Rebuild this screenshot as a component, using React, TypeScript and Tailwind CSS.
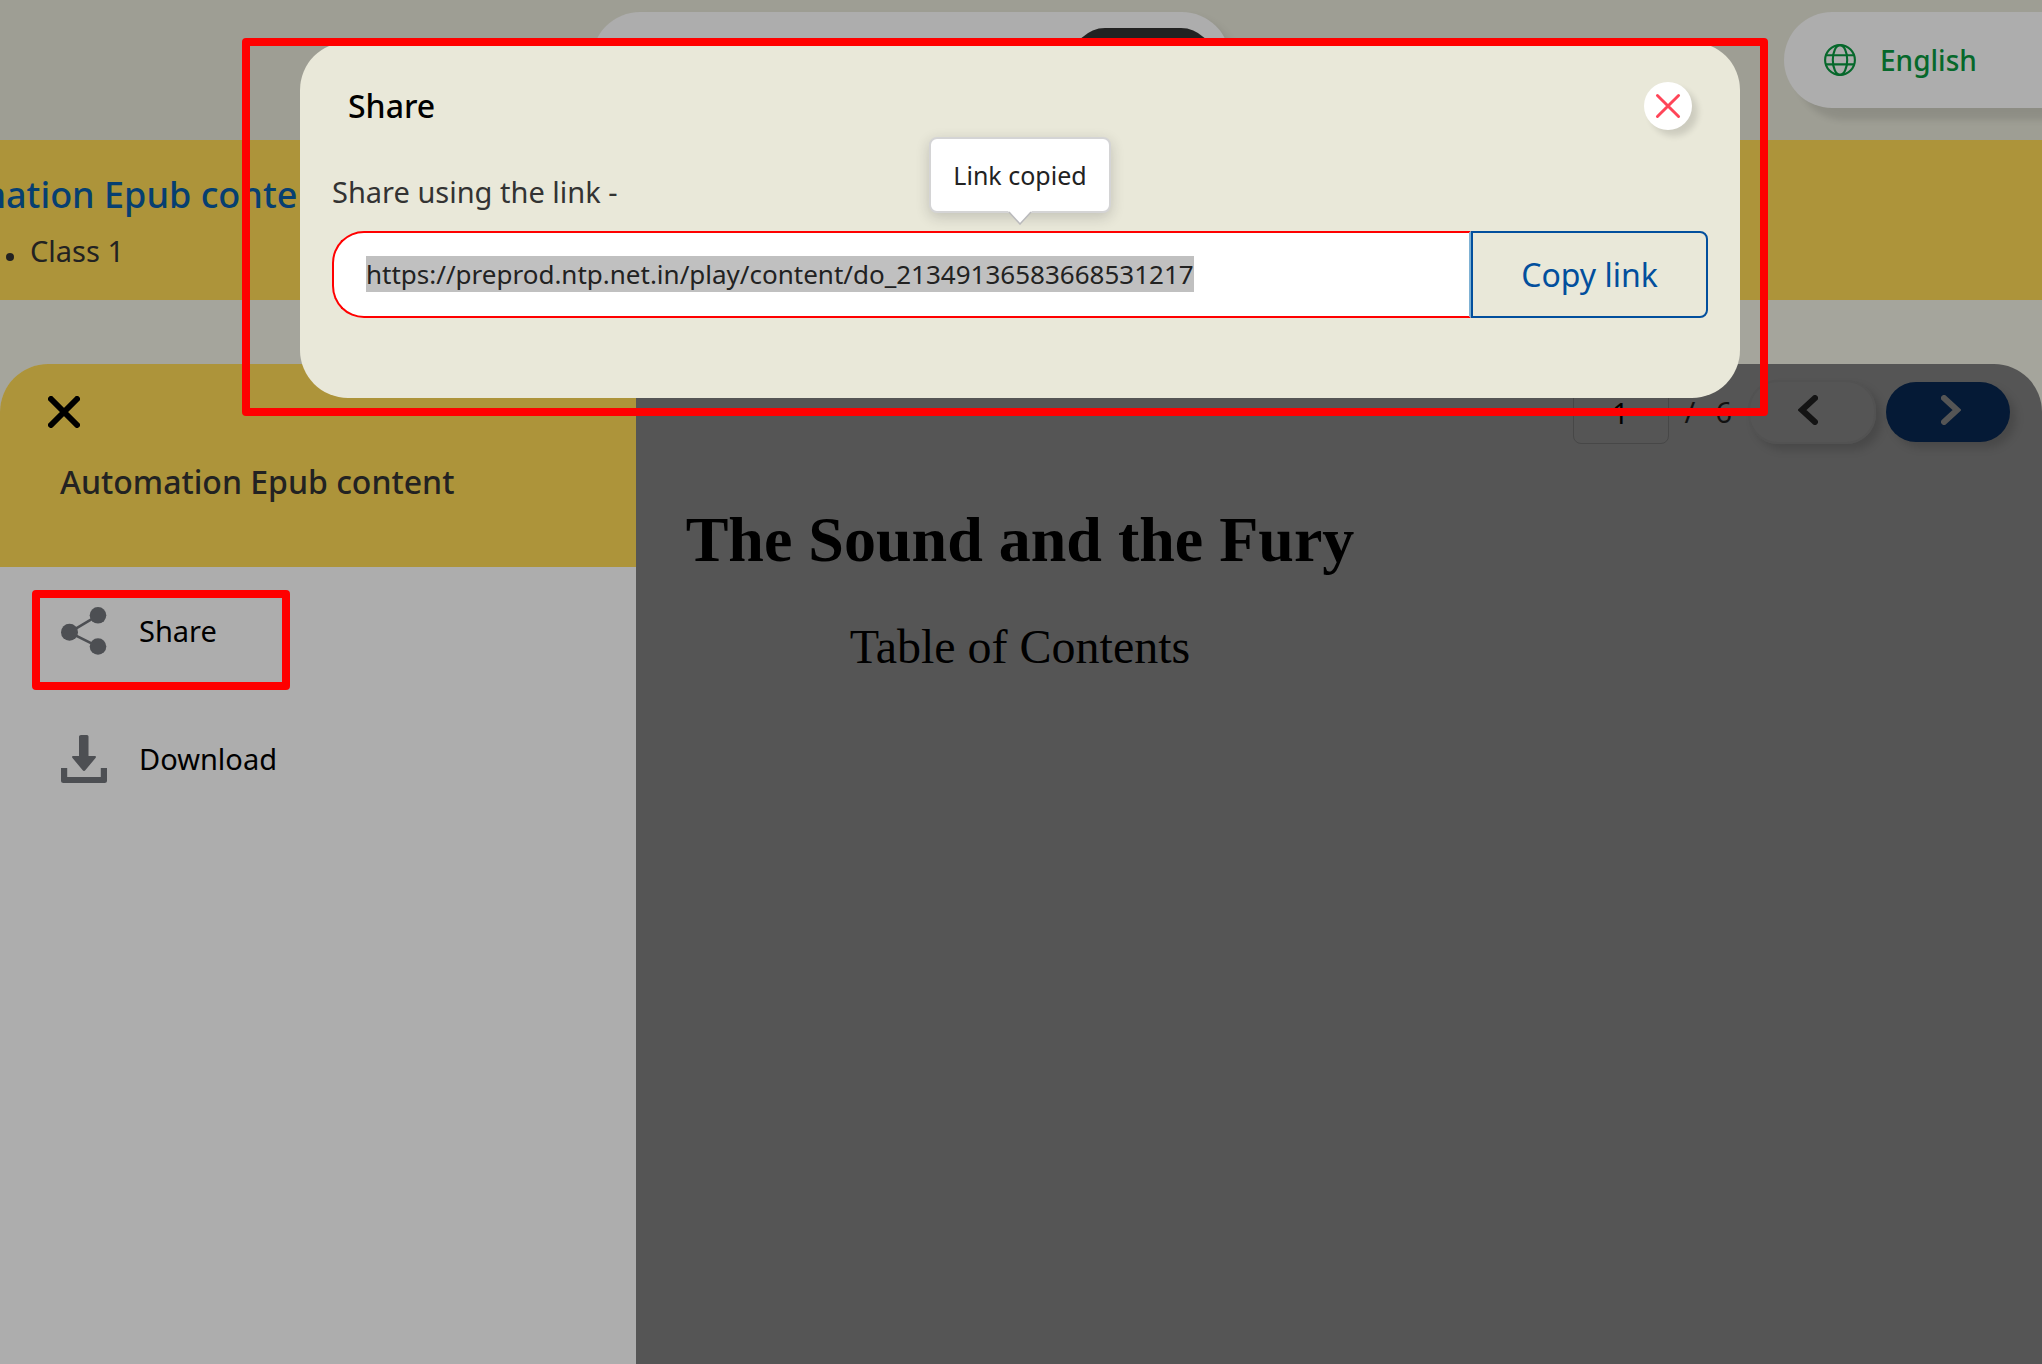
import { useEffect, useRef } from "react";

const LINK = "https://preprod.ntp.net.in/play/content/do_21349136583668531217";

function GlobeIcon() {
  return (
    <svg viewBox="0 0 32 32" className="size-8" fill="none" stroke="currentColor" strokeWidth="2.1" aria-hidden="true">
      <circle cx="16" cy="16" r="14.9" />
      <ellipse cx="16" cy="16" rx="7.2" ry="14.9" />
      <path d="M2 11.200h28M2 20.400h28" />
    </svg>
  );
}

function ShareIcon() {
  return (
    <svg viewBox="0 0 46 48" className="h-12 w-[46px] shrink-0" fill="#4d4f53" aria-hidden="true">
      <path d="M37 8.300 8.500 25.300 37 39.700" fill="none" stroke="#4d4f53" strokeWidth="2.6" />
      <circle cx="37" cy="8.3" r="8.3" />
      <circle cx="8.5" cy="25.3" r="8.5" />
      <circle cx="37" cy="39.5" r="8.3" />
    </svg>
  );
}

function DownloadIcon() {
  return (
    <svg viewBox="0 0 46 48" className="h-12 w-[46px] shrink-0" fill="#4d4f53" aria-hidden="true">
      <path d="M20 0h6q1.500 0 1.500 1.500V21h6q2.500 0 1 2L24.500 35q-1.500 2-3 0L11.500 23q-1.500-2 1-2h5.500V1.500Q18 0 20 0Z" />
      <path d="M0 33h6.200v9h33.600v-9H46v12.500q0 2.500-2.500 2.500h-41Q0 48 0 45.500Z" />
    </svg>
  );
}

function CrossIcon({ className, width }: { className: string; width: number }) {
  return (
    <svg viewBox="0 0 32 32" className={className} fill="none" stroke="currentColor" strokeWidth={width} strokeLinecap="round" aria-hidden="true">
      <path d="M3 3l26 26M29 3 3 29" />
    </svg>
  );
}

function Header() {
  return (
    <header className="flex h-[140px] items-start bg-[#9e9e94] pt-3">
      <div className="flex flex-1 justify-end">
        <div className="mr-[192px] flex h-24 w-[638px] items-center justify-end rounded-full bg-[#adadad] pr-[17px] shadow-[6px_6px_8px_rgba(0,0,0,0.1)]">
          <button type="button" aria-label="Search" className="h-16 w-[140px] rounded-full bg-[#222]" />
        </div>
      </div>
      <div className="flex w-[620px] justify-end">
        <button type="button" className="flex h-24 w-[258px] items-center gap-6 rounded-l-full bg-[#adadad] pl-10 text-[28px] font-medium text-[#06682b] shadow-[12px_12px_6px_rgba(0,0,0,0.1)]">
          <GlobeIcon />
          English
        </button>
      </div>
    </header>
  );
}

function TitleBand() {
  return (
    <section className="h-40 overflow-hidden bg-[#ad943a] pt-[30px] text-[#222]">
      <h1 className="-ml-[110px] text-4xl leading-[50px] font-medium whitespace-nowrap text-[#063f71]">Automation Epub content</h1>
      <p className="flex items-center gap-4 pl-1.5 text-[29px] leading-[62px]">
        <span className="mt-3 size-2 rounded-full bg-[#222]" />
        Class 1
      </p>
    </section>
  );
}

function Sidebar() {
  return (
    <aside className="flex w-[636px] shrink-0 flex-col bg-[#adadad] text-black">
      <div className="h-[203px] bg-[#ad943a] pt-8 pl-12">
        <button type="button" aria-label="Close menu" className="block">
          <CrossIcon className="size-8" width={6} />
        </button>
        <h2 className="mt-[29px] ml-3 text-[32px] leading-[50px] font-medium text-[#222]">Automation Epub content</h2>
      </div>
      <nav className="flex flex-col items-start pt-[23px] pl-8">
        <button type="button" className="relative flex h-[100px] w-[258px] items-start gap-8 pt-[17px] pl-[29px] text-[29px] leading-[48px]">
          <ShareIcon />
          Share
          <span className="pointer-events-none absolute inset-0 rounded border-8 border-[#f00]" />
        </button>
        <button type="button" className="mt-[45px] flex items-start gap-8 pl-[29px] text-[29px] leading-[48px]">
          <DownloadIcon />
          Download
        </button>
      </nav>
    </aside>
  );
}

function Reader() {
  return (
    <main className="flex-1 bg-[#555]">
      <div className="flex items-start justify-end pt-4 pr-8 text-[29px] text-[#111]">
        <input aria-label="Page" defaultValue="1" className="h-16 w-24 rounded-lg border border-[#474747] bg-transparent text-center text-black outline-none" />
        <span className="ml-4 flex h-[60px] items-center gap-5 pt-1">
          <span>/</span>
          <span>6</span>
        </span>
        <button type="button" aria-label="Previous page" className="ml-4 flex h-16 w-32 items-center justify-center rounded-[30px] border-2 border-[#525252] shadow-[6px_6px_8px_rgba(0,0,0,0.15)]">
          <svg viewBox="0 0 20 30" className="mr-2 mb-1 h-[30px] w-5" fill="none" stroke="#141414" strokeWidth="6" strokeLinecap="round" aria-hidden="true">
            <path d="M17 3 4 15l13 12" />
          </svg>
        </button>
        <button type="button" aria-label="Next page" className="mt-0.5 ml-2.5 flex h-[60px] w-[124px] items-center justify-center rounded-[30px] bg-[#051a36] shadow-[6px_6px_8px_rgba(0,0,0,0.15)]">
          <svg viewBox="0 0 20 30" className="mb-1 ml-1.5 h-[30px] w-5" fill="none" stroke="#555" strokeWidth="6" strokeLinecap="round" aria-hidden="true">
            <path d="M3 3l13 12L3 27" />
          </svg>
        </button>
      </div>
      <article className="w-[768px] pt-[60px] text-center font-['Liberation_Serif',serif] text-black">
        <h2 className="text-[64px] leading-[72px] font-bold">The Sound and the Fury</h2>
        <p className="mt-[43px] text-5xl leading-[56px]">Table of Contents</p>
      </article>
    </main>
  );
}

function ShareDialog() {
  const linkRef = useRef<HTMLInputElement>(null);

  useEffect(() => {
    linkRef.current?.focus();
    linkRef.current?.select();
  }, []);

  return (
    <div className="absolute inset-x-0 top-[42px] flex justify-center pr-0.5">
      <div role="dialog" aria-labelledby="share-title" className="relative h-[356px] w-full max-w-[1440px] rounded-[48px] bg-[#e9e8d9] px-8 pt-10">
        <div className="flex h-12 items-center justify-between px-4">
          <h2 id="share-title" className="text-[32px] font-medium text-black">Share</h2>
          <button type="button" aria-label="Close" className="flex size-12 items-center justify-center rounded-full bg-white text-[#ff4558] shadow-[6px_6px_6px_rgba(0,0,0,0.12)]">
            <CrossIcon className="size-[26px]" width={3.6} />
          </button>
        </div>
        <label htmlFor="share-link" className="mt-[43px] block text-[29px] leading-[38px] text-[#333]">Share using the link -</label>
        <div className="mt-5 flex h-[87px]">
          <div className="relative flex-1">
            <input
              id="share-link"
              ref={linkRef}
              readOnly
              defaultValue={LINK}
              className="h-full w-full rounded-l-[32px] border-2 border-[#f00] border-r-[#7fb2d4] bg-white px-8 pb-0.5 text-[26px] leading-[31px] text-[#222] outline-none selection:bg-[#c0c0c0] selection:text-[#222]"
            />
            <div role="status" className="absolute bottom-[105px] left-[597px] w-[182px] rounded-lg border-2 border-[#d4d4d5] bg-white py-[18px] text-center text-[25px] leading-9 whitespace-nowrap text-[#222] shadow-[0_4px_14px_rgba(34,36,38,0.2)]">
              Link copied
              <svg viewBox="0 0 24 14" className="absolute top-full left-1/2 h-3.5 w-6 -translate-x-1/2" aria-hidden="true">
                <path d="M0 0h24L12 13Z" fill="#fff" />
                <path d="M1 1l11 12L23 1" fill="none" stroke="#bababc" strokeWidth="1.5" />
              </svg>
            </div>
          </div>
          <button type="button" className="w-[237px] rounded-r-lg border-2 border-[#024f9d] text-[32px] text-[#024f9d]">Copy link</button>
        </div>
        <span className="pointer-events-none absolute -top-1 -right-7 -bottom-[18px] -left-[58px] rounded border-8 border-[#f00]" />
      </div>
    </div>
  );
}

export default function App() {
  return (
    <div className="relative flex min-h-screen flex-col overflow-hidden bg-[#a5a59c] font-['Noto_Sans',sans-serif]">
      <Header />
      <TitleBand />
      <div className="mt-16 flex flex-1 overflow-hidden rounded-t-[48px]">
        <Sidebar />
        <Reader />
      </div>
      <ShareDialog />
    </div>
  );
}
